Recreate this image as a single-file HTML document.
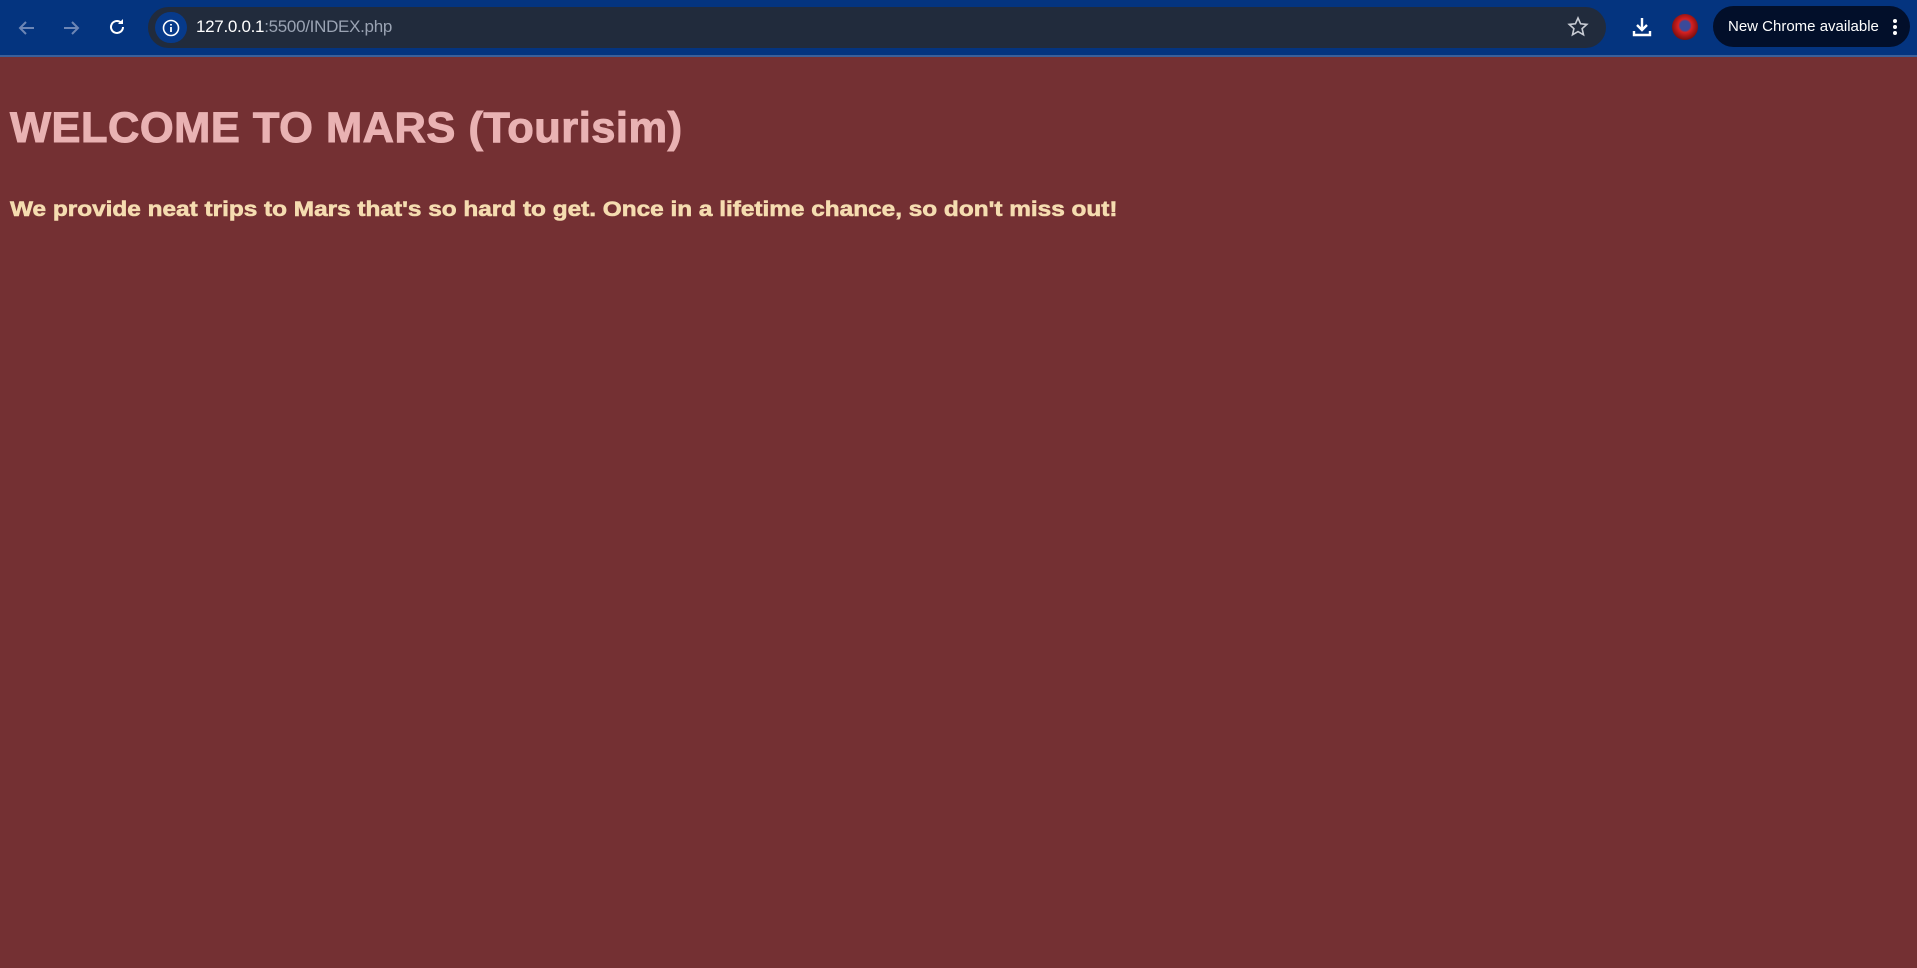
<!DOCTYPE html>
<html><head><meta charset="utf-8"><style>
html,body{margin:0;padding:0;width:1917px;height:968px;overflow:hidden;background:#743033;font-family:"Liberation Sans",sans-serif}
.bar{position:absolute;left:0;top:0;width:1917px;height:55px;background:#04347f;border-bottom:2px solid #3b5f9a}
.url{position:absolute;left:148px;top:7px;width:1458px;height:41px;border-radius:21px;background:#212b3c}
.info{position:absolute;left:155px;top:12px;width:32px;height:31px;border-radius:16px;background:#073a8a}
.utext{position:absolute;left:196px;top:17px;font-size:17px;color:#fff;letter-spacing:-0.3px}
.utext span{color:#9aa3b3}
.pill{position:absolute;left:1713px;top:6px;width:197px;height:41px;border-radius:21px;background:#020f2a;color:#fff;font-size:15px;line-height:41px}
h1{position:absolute;left:10px;top:104px;margin:0;font-size:43px;font-weight:900;color:#e9b2b3;white-space:nowrap;letter-spacing:0.5px;transform-origin:left;transform:scaleX(1.01);-webkit-text-stroke:1px #e9b2b3}
p{position:absolute;left:10px;top:198px;margin:0;font-size:21px;font-weight:bold;color:#f5dcb0;white-space:nowrap;transform-origin:left;transform:scaleX(1.16);-webkit-text-stroke:0.6px #f5dcb0}
svg{position:absolute}
</style></head><body>
<div class="bar"></div>
<svg style="left:16px;top:17px" width="22" height="22" viewBox="0 0 22 22"><path d="M18 11H4M10 5l-6 6 6 6" stroke="#6d86b5" stroke-width="2" fill="none"/></svg>
<svg style="left:60px;top:17px" width="22" height="22" viewBox="0 0 22 22"><path d="M4 11h14M12 5l6 6-6 6" stroke="#6d86b5" stroke-width="2" fill="none"/></svg>
<svg style="left:106px;top:16px" width="22" height="22" viewBox="0 0 22 22"><path d="M17 11a6 6 0 1 1-2-4.5" stroke="#fff" stroke-width="2" fill="none"/><path d="M17 3v5h-5z" fill="#fff"/></svg>
<div class="url"></div>
<div class="info"></div>
<svg style="left:162px;top:19px" width="18" height="18" viewBox="0 0 18 18"><circle cx="9" cy="9" r="7.5" stroke="#fff" stroke-width="1.6" fill="none"/><path d="M9 8v5M9 5v1.5" stroke="#fff" stroke-width="1.8"/></svg>
<div class="utext">127.0.0.1<span>:5500/INDEX.php</span></div>
<svg style="left:1567px;top:16px" width="22" height="22" viewBox="0 0 22 22"><path d="M11 2l2.6 5.8 6.2.6-4.7 4.2 1.4 6.2L11 15.6l-5.5 3.2 1.4-6.2L2.2 8.4l6.2-.6z" stroke="#c8ccd4" stroke-width="1.6" fill="none"/></svg>
<svg style="left:1630px;top:15px" width="24" height="24" viewBox="0 0 24 24"><path d="M12 3v12M7 10l5 5 5-5M4 16v4h16v-4" stroke="#fff" stroke-width="2.4" fill="none"/></svg>
<div style="position:absolute;left:1672px;top:14px;width:26px;height:26px;border-radius:13px;background:radial-gradient(circle at 50% 45%,#3a4a9a 0 25%,#d82020 35%,#801010 70%,#301010)"></div>
<div class="pill"><span style="position:absolute;left:15px">New Chrome available</span><span style="position:absolute;left:180px;top:13px;width:4px;height:4px;border-radius:2px;background:#fff;box-shadow:0 6px 0 #fff,0 12px 0 #fff"></span></div>
<h1>WELCOME TO MARS (Tourisim)</h1>
<p>We provide neat trips to Mars that's so hard to get. Once in a lifetime chance, so don't miss out!</p>
</body></html>
